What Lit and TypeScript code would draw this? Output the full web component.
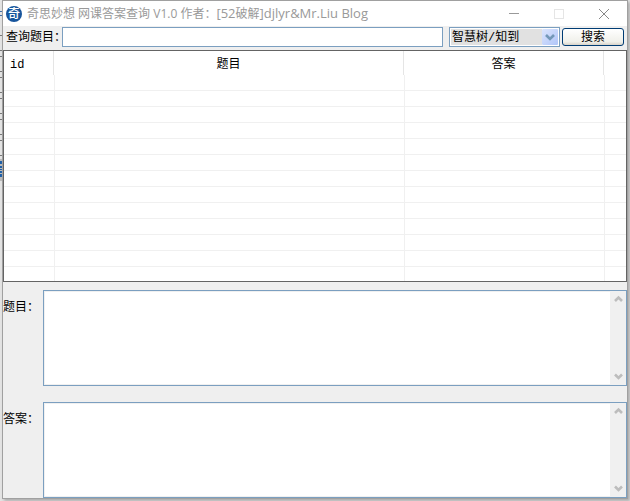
import { LitElement, html, css, svg } from "lit";
import { customElement, property, state } from "lit/decorators.js";

const chevronUp = svg`<path d="M1 6 L4.5 2.5 L8 6" fill="none" stroke="#bdbdbd" stroke-width="2.6"/>`;
const chevronDown = svg`<path d="M1 2.5 L4.5 6 L8 2.5" fill="none" stroke="#bdbdbd" stroke-width="2.6"/>`;

@customElement("memo-field")
class MemoField extends LitElement {
  @property() label = "";

  static styles = css`
    :host {
      display: flex;
      font: 12px/16px "Liberation Mono", "Noto Sans CJK SC", monospace;
      color: #000;
    }
    label {
      flex: 0 0 40px;
      padding-top: 10px;
      box-sizing: border-box;
      white-space: nowrap;
    }
    .box {
      flex: 1;
      display: flex;
      height: 96px;
      box-sizing: border-box;
      border: 1px solid #7b9fc0;
      padding: 1px 0 1px 1px;
      background: #fff;
      box-shadow: inset 0 0 0 1px #f0f0f0;
    }
    textarea {
      flex: 1;
      min-width: 0;
      border: 0;
      margin: 0;
      padding: 2px;
      resize: none;
      outline: 0;
      background: transparent;
      font: inherit;
      overflow: hidden;
    }
    .bar {
      width: 16px;
      display: flex;
      flex-direction: column;
      justify-content: space-between;
      background: #f0f0f0;
    }
    .bar button {
      height: 15px;
      border: 0;
      padding: 0;
      background: none;
      display: flex;
      align-items: center;
      justify-content: center;
    }
  `;

  render() {
    return html`
      <label for="memo">${this.label}</label>
      <div class="box">
        <textarea id="memo"></textarea>
        <div class="bar">
          <button aria-label="向上滚动"><svg width="9" height="9">${chevronUp}</svg></button>
          <button aria-label="向下滚动"><svg width="9" height="9">${chevronDown}</svg></button>
        </div>
      </div>
    `;
  }
}

@customElement("app-root")
class AppRoot extends LitElement {
  @state() rows: string[][] = Array.from({ length: 13 }, () => ["", "", "", ""]);

  static styles = css`
    :host {
      display: block;
      box-sizing: border-box;
      min-height: 100vh;
      padding: 0 2px;
      color: #000;
      font: 12px/16px "Liberation Mono", "Noto Sans CJK SC", monospace;
      background: #e4e4e4;
      position: relative;
      overflow: hidden;
    }
    .behind {
      position: absolute;
      left: 0;
      top: 0;
    }
    .window {
      position: relative;
      border: 1px solid #a0a0a0;
      background: #efefef;
      box-shadow: 2px 2px 3px #aaa;
    }
    .title {
      display: flex;
      align-items: center;
      height: 25px;
      background: #fff;
      color: #999;
      padding: 0 1px 0 3px;
    }
    .logo {
      flex: none;
      margin-right: 5px;
      overflow: visible;
    }
    h1 {
      flex: 1;
      margin: 0;
      font: 12px/24px "Open Sans", "Noto Sans CJK SC", sans-serif;
      white-space: nowrap;
    }
    .latin {
      font-size: 13px;
    }
    .title button {
      width: 45px;
      height: 24px;
      border: 0;
      padding: 0;
      background: none;
      display: flex;
      align-items: center;
      justify-content: center;
    }
    .search {
      display: flex;
      align-items: center;
      height: 22px;
      padding: 0 3px;
      gap: 6px;
    }
    .search label {
      white-space: nowrap;
      width: 50px;
      padding-top: 2px;
    }
    .search input {
      flex: 1;
      min-width: 0;
      height: 20px;
      box-sizing: border-box;
      border: 1px solid #7b9fc0;
      background: #fff;
      padding: 0 3px;
      font: inherit;
      outline: 0;
    }
    .combo {
      position: relative;
      width: 111px;
      height: 20px;
    }
    .combo select {
      appearance: none;
      display: block;
      width: 100%;
      height: 100%;
      box-sizing: border-box;
      border: 1px solid #7b9fc0;
      border-radius: 0;
      padding: 2px 18px 0 2px;
      background: #e1e1e1;
      box-shadow: inset 0 0 0 1px #fff;
      font: inherit;
      color: #000;
      outline: 0;
    }
    .arrow {
      position: absolute;
      right: 1px;
      top: 1px;
      pointer-events: none;
    }
    .go {
      width: 62px;
      height: 18px;
      margin-left: -4px;
      border: 1px solid #003c74;
      border-radius: 3px;
      padding: 2px 0 0;
      background: linear-gradient(#fff, #f0f0ea 80%, #d8d2c8);
      font: inherit;
      line-height: 14px;
      color: #000;
    }
    .grid {
      margin-top: 2px;
      border: 1px solid #646464;
      background: #fff;
    }
    table {
      width: 100%;
      table-layout: fixed;
      border-collapse: separate;
      border-spacing: 0;
    }
    th {
      height: 20px;
      padding: 4px 0 0;
      font-weight: normal;
      border-right: 1px solid #e5e5e5;
    }
    th.id {
      text-align: left;
      padding-left: 6px;
    }
    td {
      height: 15px;
      padding: 0;
      border-left: 1px solid #f0f0f0;
      border-bottom: 1px solid #f0f0f0;
    }
    th:last-child {
      border-right: 0;
    }
    td:first-child {
      border-left: 0;
    }
    tr:last-child td {
      height: 14px;
      border-bottom: 0;
    }
    .c-id { width: 50px; }
    .c-answer { width: 200px; }
    .c-rest { width: 22px; }
    .memos {
      display: grid;
      gap: 16px;
      padding-top: 8px;
    }
  `;

  render() {
    return html`
      <svg class="behind" width="2" height="501">
        ${[35, 50, 56, 71, 77, 92, 98, 113, 119, 134, 140, 155].map(
          (y) => svg`<rect y=${y} width="2" height="1" fill="#777"/>`)}
        <path d="M0 11h2v1h-2zM0 15h2v1h-2z" fill="#3f6fa8"/>
        <rect y="159" width="2" height="22" fill="#bcbcbc"/>
        <path d="M0 161h2v3h-2zM0 166h2v2h-2zM0 169h2v1h-2zM0 171h2v2h-2zM0 174h2v3h-2z" fill="#1c5ea8"/>
      </svg>
      <main class="window">
        <header class="title">
          <svg class="logo" width="16" height="16" viewBox="0 0 16 16">
            <circle cx="8" cy="8" r="8" fill="#17559c"/>
            <text x="8" y="12" text-anchor="middle" font-size="12" font-weight="500" font-family="Noto Sans CJK SC, sans-serif" fill="#fff">奇</text>
          </svg>
          <h1>奇思妙想 网课答案查询 V1.0 作者：<span class="latin">[52</span>破解<span class="latin">]djlyr&amp;Mr.Liu Blog</span></h1>
          <button aria-label="最小化"><svg width="10" height="10"><path d="M0 4.5H10" stroke="#999"/></svg></button>
          <button aria-label="最大化" disabled><svg width="10" height="10"><rect x=".5" y=".5" width="9" height="9" fill="none" stroke="#e5e5e5"/></svg></button>
          <button aria-label="关闭"><svg width="10" height="10"><path d="M0 0L10 10M10 0L0 10" stroke="#888"/></svg></button>
        </header>
        <form class="search" @submit=${(e: Event) => e.preventDefault()}>
          <label for="q">查询题目：</label>
          <input id="q" type="text" />
          <span class="combo">
            <select aria-label="平台"><option>智慧树/知到</option></select>
            <svg class="arrow" width="17" height="18">
              <defs><linearGradient id="g" x2="1" y2="1"><stop stop-color="#dbe5fd"/><stop offset="1" stop-color="#b0c5f8"/></linearGradient></defs>
              <rect width="17" height="18" fill="#fff"/>
              <rect y="1" width="16" height="16" rx="1" fill="url(#g)"/>
              <path d="M4 7L8 11L12 7" fill="none" stroke="#7398b8" stroke-width="2.6"/>
            </svg>
          </span>
          <button class="go">搜索</button>
        </form>
        <div class="grid">
          <table>
            <colgroup><col class="c-id" /><col /><col class="c-answer" /><col class="c-rest" /></colgroup>
            <thead><tr><th class="id">id</th><th>题目</th><th>答案</th><th></th></tr></thead>
            <tbody>${this.rows.map((r) => html`<tr>${r.map((c) => html`<td>${c}</td>`)}</tr>`)}</tbody>
          </table>
        </div>
        <section class="memos">
          <memo-field label="题目："></memo-field>
          <memo-field label="答案："></memo-field>
        </section>
      </main>
    `;
  }
}
